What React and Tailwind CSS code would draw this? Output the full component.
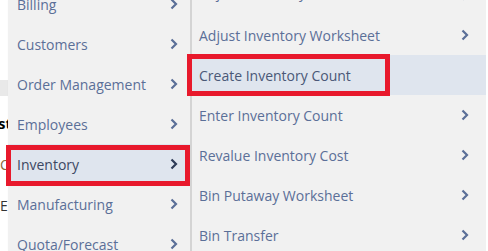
import React from "react";

function Chevron({ dark }) {
  return (
    <svg width="8" height="12" viewBox="0 0 8 12" className="shrink-0">
      <polyline
        points="1.5,1.5 6,6 1.5,10.5"
        fill="none"
        stroke={dark ? "#2e3b57" : "#5b6f98"}
        strokeWidth="2.2"
      />
    </svg>
  );
}

const left = [
  "Billing",
  "Customers",
  "Order Management",
  "Employees",
  "Inventory",
  "Manufacturing",
  "Quota/Forecast",
];

const right = [
  "Adjust Inventory",
  "Adjust Inventory Worksheet",
  "Create Inventory Count",
  "Enter Inventory Count",
  "Revalue Inventory Cost",
  "Bin Putaway Worksheet",
  "Bin Transfer",
];

export default function App() {
  return (
    <div
      className="relative w-[488px] h-[251px] overflow-hidden bg-white"
      style={{ fontFamily: '"Open Sans", sans-serif' }}
    >
      {/* page behind menus */}
      <div className="absolute inset-0">
        <div className="absolute left-0 top-[80px] w-[20px] h-[16px] bg-[#e9e9e9]" />
        <div className="absolute left-[-2px] top-[116px] text-[15px] font-bold text-black leading-none">st</div>
        <div className="absolute left-0 top-[158px] text-[14px] text-[#8a6a3a] leading-none">C</div>
        <div className="absolute left-0 top-[199px] text-[14px] text-[#333] leading-none">E</div>
        <div className="absolute left-[480px] top-[156px] w-[8px] h-px bg-[#c8c8c8]" />
        <div className="absolute left-[480px] top-[180px] w-[8px] h-px bg-[#c8c8c8]" />
      </div>

      <div className="relative flex h-full">
        <div className="w-[8px] shrink-0" />
        {/* main menu */}
        <div className="w-[182px] shrink-0 bg-[#f1f1f1] shadow-[1px_0_2px_rgba(0,0,0,0.15)] h-full">
          <div className="mt-[-16px] flex flex-col">
            {left.map((t) => {
              const active = t === "Inventory";
              return (
                <div
                  key={t}
                  className={`h-[40px] flex items-center justify-between pl-[9px] pr-[12px] text-[14px] ${
                    active ? "bg-[#dfe5ee] text-[#3c4863]" : "text-[#5b6f98]"
                  }`}
                >
                  <span>{t}</span>
                  <Chevron dark={active} />
                </div>
              );
            })}
          </div>
        </div>
        {/* submenu */}
        <div className="w-[296px] shrink-0 bg-[#f1f1f1] border-l-2 border-[#d4d4d4] h-full">
          <div className="mt-[-25px] flex flex-col">
            {right.map((t, i) => {
              const active = t === "Create Inventory Count";
              return (
                <div
                  key={t}
                  className={`h-[40px] flex items-center justify-between pl-[7px] pr-[17px] text-[14px] ${
                    active ? "bg-[#dfe5ee] text-[#4a5877]" : "text-[#5b6f98]"
                  }`}
                >
                  <span className={i === 0 ? "-translate-y-[3px]" : ""}>{t}</span>
                  {!active && <Chevron />}
                </div>
              );
            })}
          </div>
        </div>
        <div className="flex-1 bg-white" />
      </div>

      {/* red annotation boxes */}
      <div className="absolute left-[6px] top-[145px] w-[184px] h-[41px] border-[5px] border-[#e8192c]" />
      <div className="absolute left-[187px] top-[54px] w-[203px] h-[42px] border-[5px] border-[#e8192c]" />
    </div>
  );
}
